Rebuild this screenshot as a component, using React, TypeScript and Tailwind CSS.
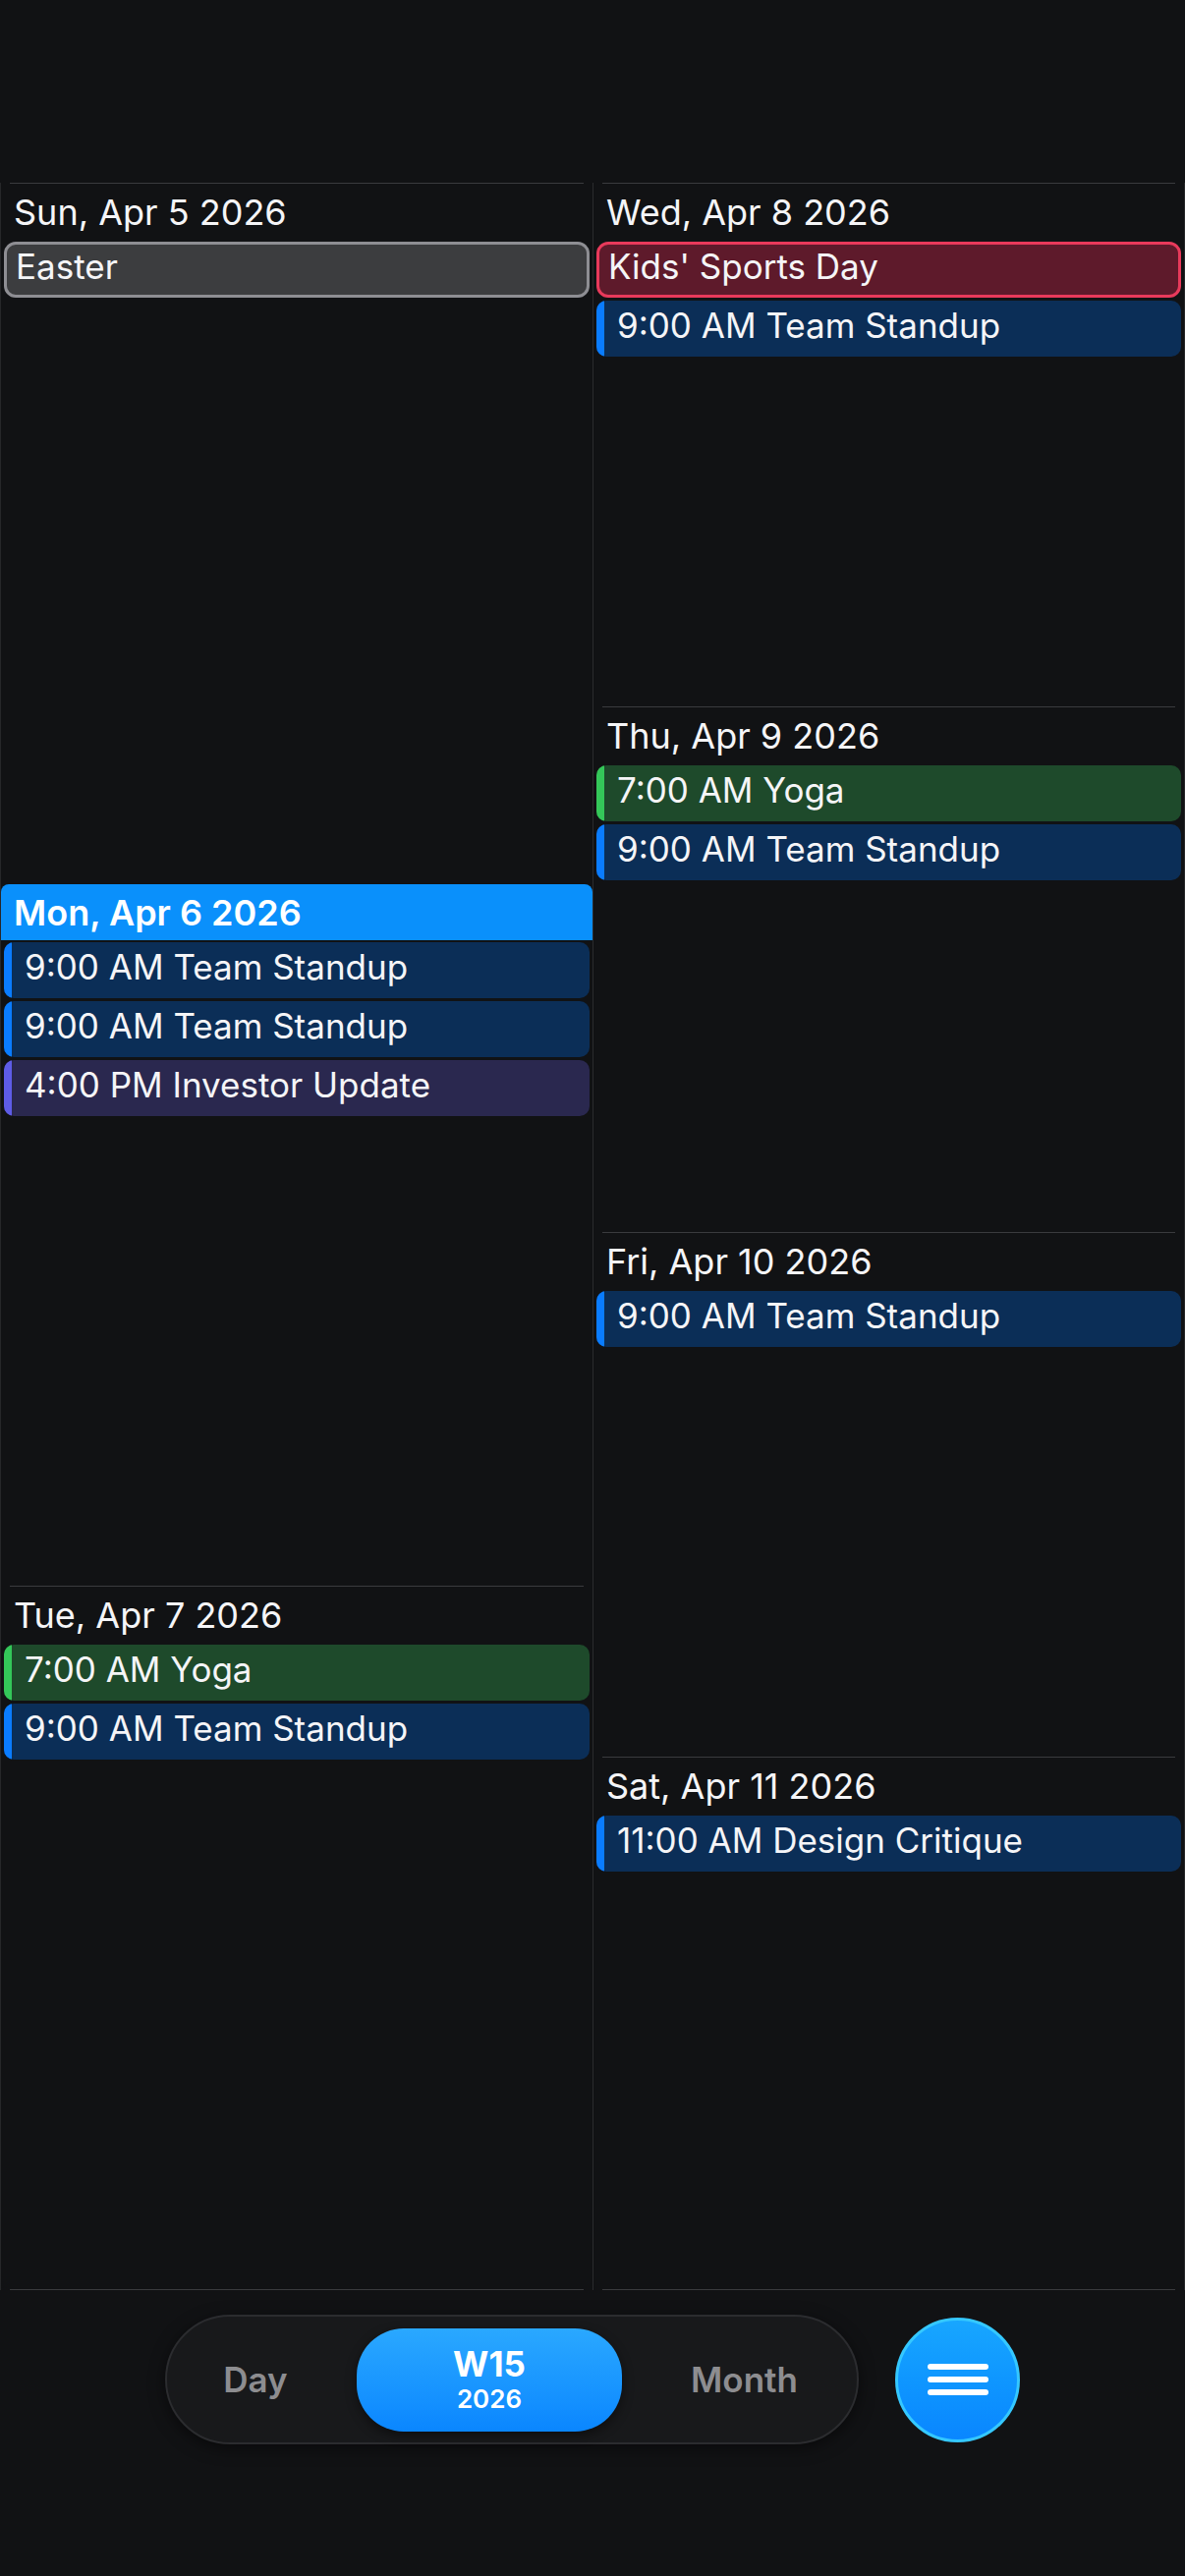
import React from "react";

type Ev = { text: string; kind: "blue" | "green" | "purple" | "gray" | "red" };

const accent: Record<string, string> = {
  blue: "bg-[#0a7cff]",
  green: "bg-[#34c759]",
  purple: "bg-[#5e5ce6]",
};
const fill: Record<string, string> = {
  blue: "bg-[#0b2e57]",
  green: "bg-[#1e4a2b]",
  purple: "bg-[#2a284f]",
};

function Chip({ ev }: { ev: Ev }) {
  if (ev.kind === "gray") {
    return (
      <div className="h-[57px] rounded-[12px] border-[3px] border-[#8e8e93] bg-[#3c3d3f] flex items-center pl-[9px] pb-[6px] text-[35px] text-[#f5f5f7]">
        {ev.text}
      </div>
    );
  }
  if (ev.kind === "red") {
    return (
      <div className="h-[57px] rounded-[12px] border-[3px] border-[#e83a5b] bg-[#5e1a2b] flex items-center pl-[9px] pb-[6px] text-[35px] text-[#f5f5f7]">
        {ev.text}
      </div>
    );
  }
  return (
    <div className={"h-[57px] rounded-[10px] overflow-hidden flex " + fill[ev.kind]}>
      <div className={"w-[8px] shrink-0 " + accent[ev.kind]} />
      <div className="flex items-center pl-[13px] pb-[6px] text-[35px] text-[#f5f5f7]">{ev.text}</div>
    </div>
  );
}

function Cell({
  label,
  today,
  events,
  h,
}: {
  label: string;
  today?: boolean;
  events: Ev[];
  h: string;
}) {
  return (
    <div className={"flex flex-col px-[3px] min-h-0 " + h}>
      {today ? (
        <div className="h-[57px] -mx-[3px] bg-[#0a90fb] rounded-t-[8px] flex items-center pl-[13px] font-semibold text-[36px] text-white">
          {label}
        </div>
      ) : (
        <>
          <div className="mx-[6px] h-px bg-[#3a3b3e]" />
          <div className="h-[57px] flex items-center pl-[10px] text-[36px] text-[#f5f5f7]">{label}</div>
        </>
      )}
      <div className="flex flex-col gap-[3px] mt-[2px]">
        {events.map((e, i) => (
          <Chip key={i} ev={e} />
        ))}
      </div>
    </div>
  );
}

const standup: Ev = { text: "9:00 AM Team Standup", kind: "blue" };
const yoga: Ev = { text: "7:00 AM Yoga", kind: "green" };

export default function App() {
  return (
    <div
      className="w-[1206px] h-[2622px] bg-[#111214] overflow-hidden flex flex-col"
      style={{ fontFamily: "Inter, 'Noto Sans', sans-serif" }}
    >
      <div className="pt-[186px]" />
      <div className="h-[2145px] flex border-l border-r border-[#262729]">
        <div className="w-[603px] flex flex-col border-r border-[#2a2b2d]">
          <Cell h="h-[714px]" label="Sun, Apr 5 2026" events={[{ text: "Easter", kind: "gray" }]} />
          <Cell
            h="h-[714px]"
            label="Mon, Apr 6 2026"
            today
            events={[standup, standup, { text: "4:00 PM Investor Update", kind: "purple" }]}
          />
          <Cell h="flex-1" label="Tue, Apr 7 2026" events={[yoga, standup]} />
          <div className="mx-[9px] h-px bg-[#3a3b3e]" />
        </div>
        <div className="flex-1 flex flex-col">
          <Cell h="h-[533px]" label="Wed, Apr 8 2026" events={[{ text: "Kids' Sports Day", kind: "red" }, standup]} />
          <Cell h="h-[535px]" label="Thu, Apr 9 2026" events={[yoga, standup]} />
          <Cell h="h-[534px]" label="Fri, Apr 10 2026" events={[standup]} />
          <Cell h="flex-1" label="Sat, Apr 11 2026" events={[{ text: "11:00 AM Design Critique", kind: "blue" }]} />
          <div className="mx-[9px] h-px bg-[#3a3b3e]" />
        </div>
      </div>
      <div className="mt-[25px] flex justify-center items-center gap-[37px]">
        <div className="w-[706px] h-[132px] rounded-full border-2 border-[#2b2c2f] bg-[#18191b] flex items-center shadow-[0_4px_16px_rgba(0,0,0,0.5)]">
          <div className="w-[180px] text-center text-[35px] font-semibold text-[#8d8d90]">Day</div>
          <div className="ml-[13px] w-[270px] h-[105px] rounded-[48px] bg-gradient-to-b from-[#2aa8ff] to-[#0a86ff] flex flex-col items-center justify-center shadow-[0_4px_12px_rgba(0,0,0,0.45)]">
            <div className="text-[35px] font-bold text-white leading-[40px]">W15</div>
            <div className="text-[26px] font-semibold text-white leading-[32px]">2026</div>
          </div>
          <div className="flex-1 pl-[10px] text-center text-[35px] font-semibold text-[#8d8d90]">Month</div>
        </div>
        <div className="w-[127px] h-[127px] rounded-full border-[3px] border-[#35c8ff] bg-gradient-to-b from-[#18a6ff] to-[#0a86ff] flex flex-col items-center justify-center gap-[7px]">
          <div className="w-[62px] h-[6px] rounded-full bg-white" />
          <div className="w-[62px] h-[6px] rounded-full bg-white" />
          <div className="w-[62px] h-[6px] rounded-full bg-white" />
        </div>
      </div>
    </div>
  );
}
